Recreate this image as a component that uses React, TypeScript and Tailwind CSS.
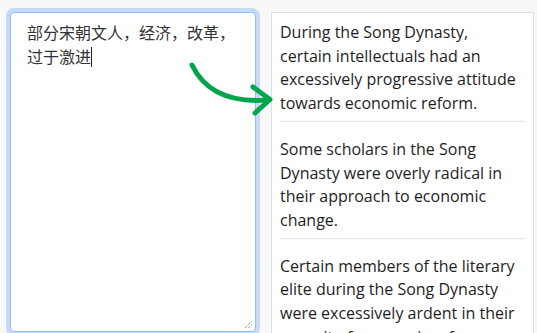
import React from "react";

const items = [
  "During the Song Dynasty, certain intellectuals had an excessively progressive attitude towards economic reform.",
  "Some scholars in the Song Dynasty were overly radical in their approach to economic change.",
  "Certain members of the literary elite during the Song Dynasty were excessively ardent in their pursuit of economic reform.",
];

export default function App() {
  return (
    <div
      className="relative h-[333px] w-[537px] overflow-hidden bg-[#f8f8f8] flex items-start"
      style={{ fontFamily: '"Open Sans", "Noto Sans CJK SC", sans-serif' }}
    >
      <div className="relative ml-[10px] mt-[12px] h-[320px] w-[246px] shrink-0 rounded-[4px] border border-[#94bdf3] bg-white pl-[16px] pr-[12px] pt-[7px] shadow-[0_0_0_4px_#c5dbf7] text-[16px] leading-[24px] text-[#333]"
        style={{ fontFamily: '"Noto Sans CJK SC", sans-serif' }}
      >
        <span>部分宋朝文人，经济，改革，过于激进</span>
        <span className="inline-block h-[20px] w-px bg-[#222] align-[-4px]" />
        <svg className="absolute bottom-[2px] right-[2px]" width="9" height="9" viewBox="0 0 9 9">
          <path d="M1 8 L8 1 M4.5 8 L8 4.5" stroke="#666" strokeWidth="1" strokeDasharray="1 1" />
        </svg>
      </div>
      <div className="ml-[15px] mt-[12px] w-[263px] shrink-0 border border-[#d7e1ec] bg-white px-[8px] pt-[8px] h-[340px]">
        {items.map((t, i) => (
          <div key={i}>
            <p className="text-[16px] leading-[23.7px] text-[#1e1e1e] pr-[4px]">{t}</p>
            {i < items.length - 1 && <div className="mt-[5px] mb-[16px] h-px bg-[#dde5ee]" />}
          </div>
        ))}
      </div>
      <svg className="absolute left-0 top-0 pointer-events-none" width="537" height="333">
        <path d="M192 65 C 205 92, 230 103, 268 100" fill="none" stroke="#05a54e" strokeWidth="5" strokeLinecap="round" />
        <path d="M253 87 L270 99.5 L255 113" fill="none" stroke="#05a54e" strokeWidth="5" strokeLinecap="round" strokeLinejoin="round" />
      </svg>
    </div>
  );
}
